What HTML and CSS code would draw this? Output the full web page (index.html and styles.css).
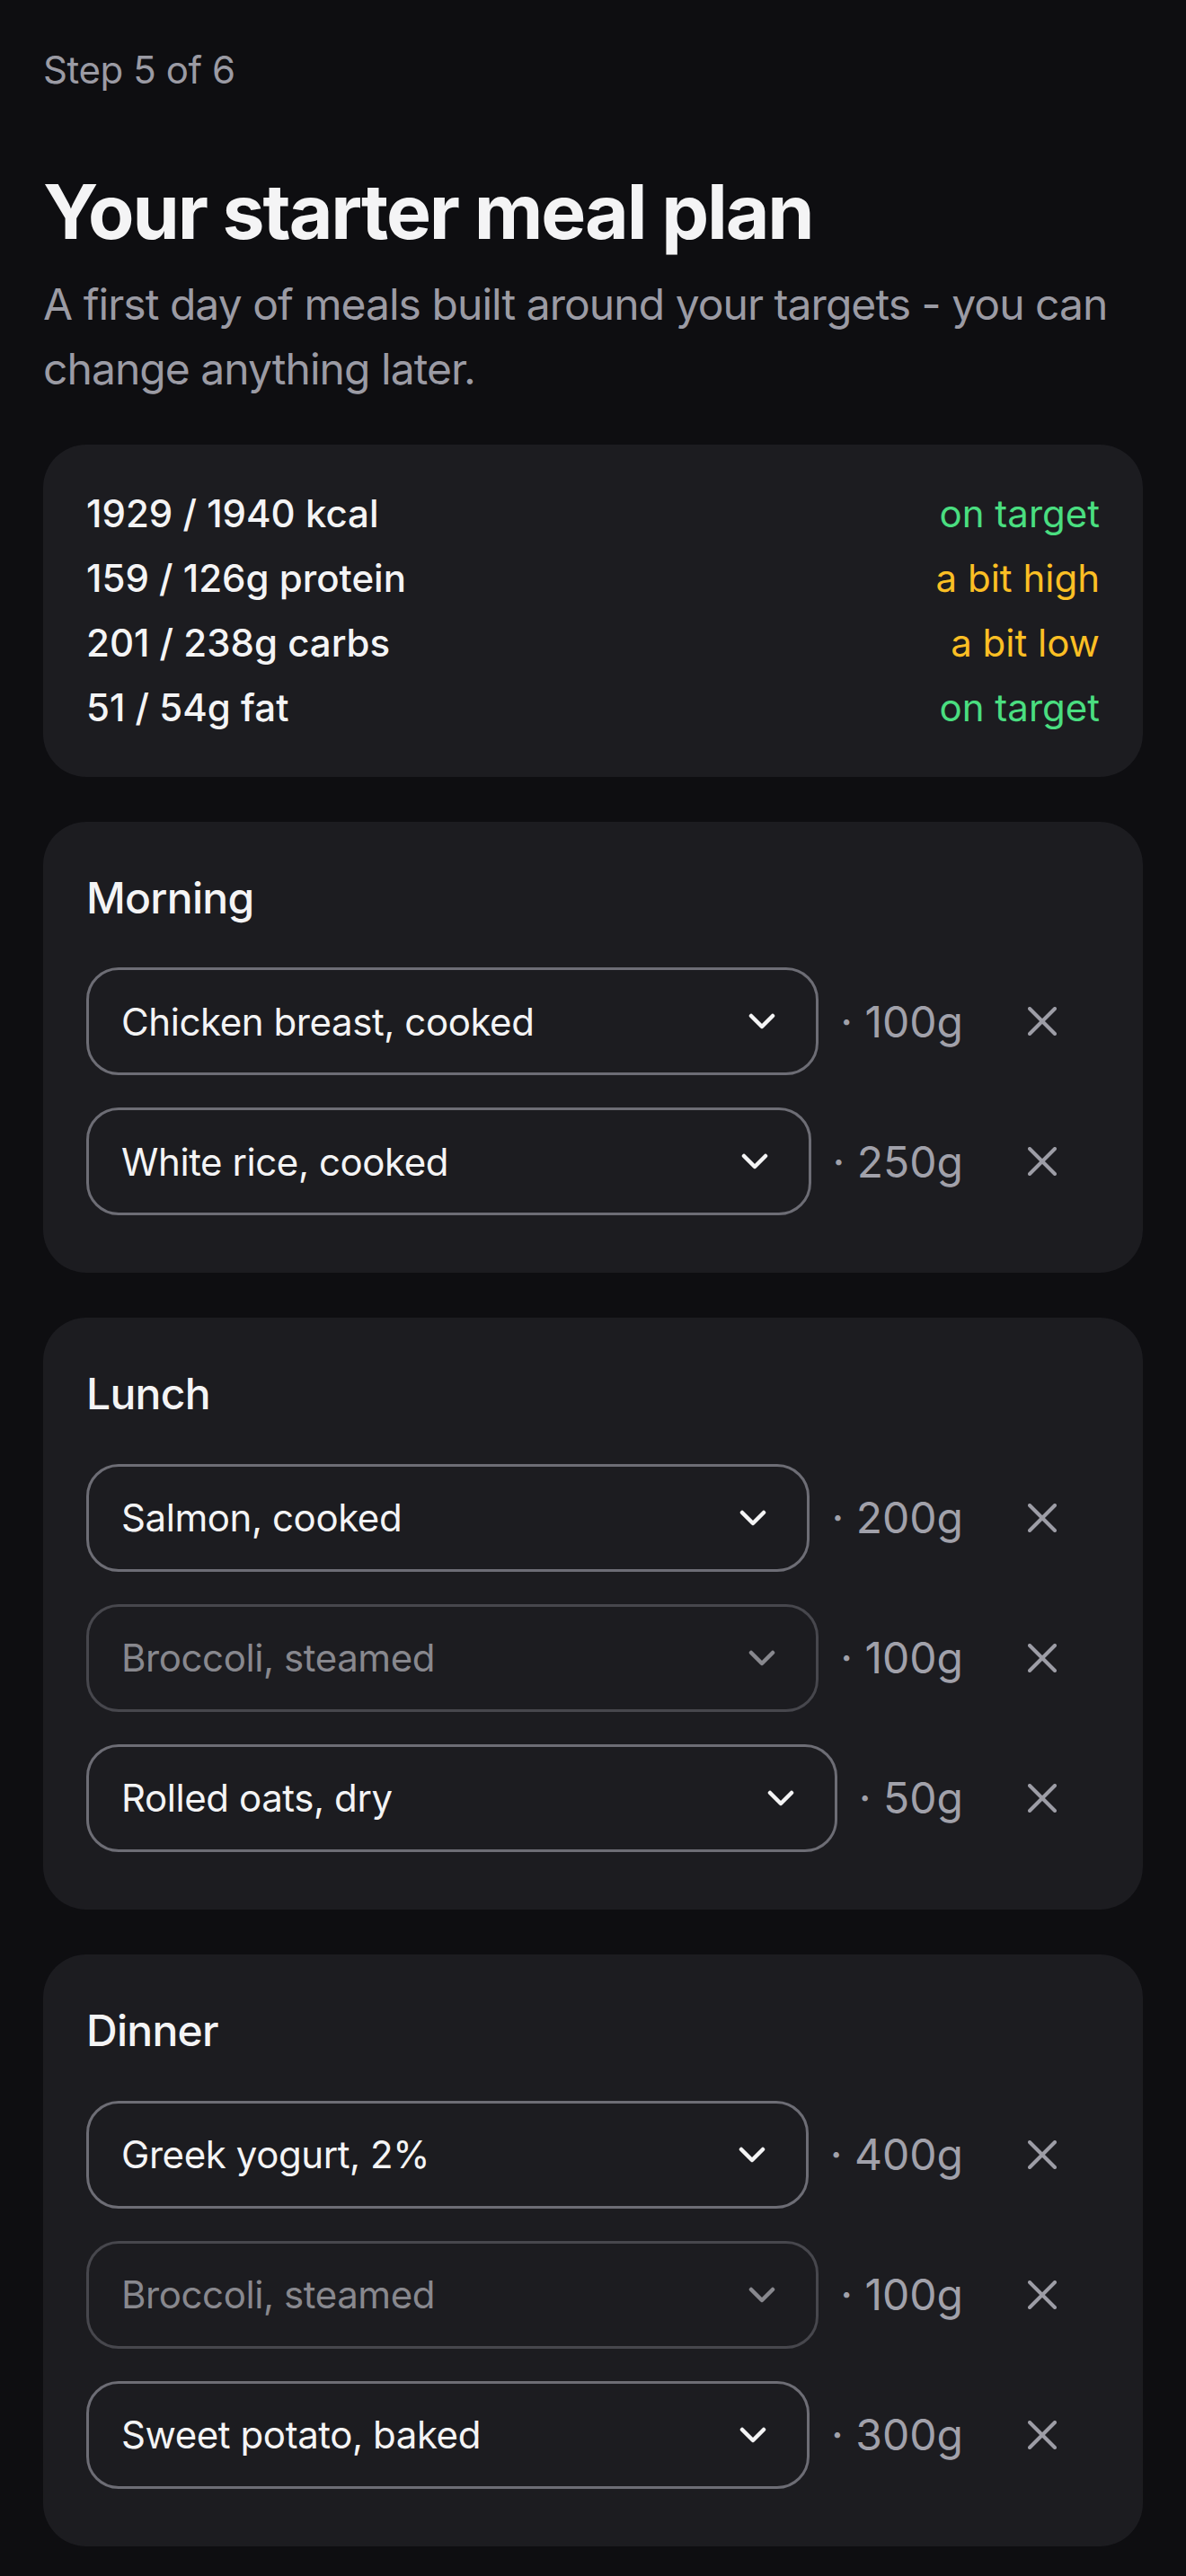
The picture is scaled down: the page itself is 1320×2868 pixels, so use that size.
FILE: index.html
```html
<!DOCTYPE html>
<html lang="en">
<head>
  <meta charset="utf-8">
  <meta name="viewport" content="width=device-width, initial-scale=1.0">
  <title>Starter meal plan</title>
  <link rel="stylesheet" href="styles.css">
</head>
<body>

  <div class="page">
    <p class="step">Step 5 of 6</p>
    <h1>Your starter meal plan</h1>
    <p class="lede">A first day of meals built around your targets - you can change anything later.</p>

    <div class="stack">
      <!-- Totals vs targets -->
      <div class="card summary">
        <div class="stat"><span>1929 / 1940 kcal</span><span class="ok">on target</span></div>
        <div class="stat"><span>159 / 126g protein</span><span class="warn">a bit high</span></div>
        <div class="stat"><span>201 / 238g carbs</span><span class="warn">a bit low</span></div>
        <div class="stat"><span>51 / 54g fat</span><span class="ok">on target</span></div>
      </div>

      <!-- Morning -->
      <div class="card meal">
        <h2>Morning</h2>
        <div class="items">
          <div class="item">
            <button class="picker"><span>Chicken breast, cooked</span><svg class="chev" viewBox="0 0 30 18"><polyline points="3,3 15,15 27,3"/></svg></button>
            <span class="qty">· 100g</span>
            <button class="remove" aria-label="Remove"><svg viewBox="0 0 32 32"><line x1="2" y1="2" x2="30" y2="30"/><line x1="30" y1="2" x2="2" y2="30"/></svg></button>
          </div>
          <div class="item">
            <button class="picker"><span>White rice, cooked</span><svg class="chev" viewBox="0 0 30 18"><polyline points="3,3 15,15 27,3"/></svg></button>
            <span class="qty">· 250g</span>
            <button class="remove" aria-label="Remove"><svg viewBox="0 0 32 32"><line x1="2" y1="2" x2="30" y2="30"/><line x1="30" y1="2" x2="2" y2="30"/></svg></button>
          </div>
        </div>
      </div>

      <!-- Lunch -->
      <div class="card meal">
        <h2>Lunch</h2>
        <div class="items">
          <div class="item">
            <button class="picker"><span>Salmon, cooked</span><svg class="chev" viewBox="0 0 30 18"><polyline points="3,3 15,15 27,3"/></svg></button>
            <span class="qty">· 200g</span>
            <button class="remove" aria-label="Remove"><svg viewBox="0 0 32 32"><line x1="2" y1="2" x2="30" y2="30"/><line x1="30" y1="2" x2="2" y2="30"/></svg></button>
          </div>
          <div class="item">
            <button class="picker muted"><span>Broccoli, steamed</span><svg class="chev" viewBox="0 0 30 18"><polyline points="3,3 15,15 27,3"/></svg></button>
            <span class="qty">· 100g</span>
            <button class="remove" aria-label="Remove"><svg viewBox="0 0 32 32"><line x1="2" y1="2" x2="30" y2="30"/><line x1="30" y1="2" x2="2" y2="30"/></svg></button>
          </div>
          <div class="item">
            <button class="picker"><span>Rolled oats, dry</span><svg class="chev" viewBox="0 0 30 18"><polyline points="3,3 15,15 27,3"/></svg></button>
            <span class="qty">· 50g</span>
            <button class="remove" aria-label="Remove"><svg viewBox="0 0 32 32"><line x1="2" y1="2" x2="30" y2="30"/><line x1="30" y1="2" x2="2" y2="30"/></svg></button>
          </div>
        </div>
      </div>

      <!-- Dinner -->
      <div class="card meal">
        <h2>Dinner</h2>
        <div class="items">
          <div class="item">
            <button class="picker"><span>Greek yogurt, 2%</span><svg class="chev" viewBox="0 0 30 18"><polyline points="3,3 15,15 27,3"/></svg></button>
            <span class="qty">· 400g</span>
            <button class="remove" aria-label="Remove"><svg viewBox="0 0 32 32"><line x1="2" y1="2" x2="30" y2="30"/><line x1="30" y1="2" x2="2" y2="30"/></svg></button>
          </div>
          <div class="item">
            <button class="picker muted"><span>Broccoli, steamed</span><svg class="chev" viewBox="0 0 30 18"><polyline points="3,3 15,15 27,3"/></svg></button>
            <span class="qty">· 100g</span>
            <button class="remove" aria-label="Remove"><svg viewBox="0 0 32 32"><line x1="2" y1="2" x2="30" y2="30"/><line x1="30" y1="2" x2="2" y2="30"/></svg></button>
          </div>
          <div class="item">
            <button class="picker"><span>Sweet potato, baked</span><svg class="chev" viewBox="0 0 30 18"><polyline points="3,3 15,15 27,3"/></svg></button>
            <span class="qty">· 300g</span>
            <button class="remove" aria-label="Remove"><svg viewBox="0 0 32 32"><line x1="2" y1="2" x2="30" y2="30"/><line x1="30" y1="2" x2="2" y2="30"/></svg></button>
          </div>
        </div>
      </div>
    </div>
  </div>

</body>
</html>
```

FILE: styles.css
```css
* {
  font-family: Inter, 'Noto Sans', sans-serif;
  box-sizing: border-box;
}

body {
  margin: 0;
  background-color: #0e0e11;
  color: #f4f4f5;
}

.page {
  padding: 48px 48px 34px;
}

.step {
  margin: 0;
  font-size: 42px;
  line-height: 60px;
  letter-spacing: -0.01em;
  color: #9b9ba4;
}

h1 {
  margin: 78px 0 0;
  font-size: 84px;
  font-weight: 700;
  line-height: 1.2;
  letter-spacing: -0.025em;
  color: #f4f4f5;
}

.lede {
  margin: 16px 0 0;
  font-size: 48px;
  line-height: 72px;
  letter-spacing: -0.02em;
  color: #9b9ba4;
}

.stack {
  display: flex;
  flex-direction: column;
  gap: 50px;
  margin-top: 48px;
}

.card {
  background-color: #1c1c20;
  border-radius: 48px;
}

.summary {
  display: flex;
  flex-direction: column;
  gap: 12px;
  padding: 47px 48px;
}

.stat {
  display: flex;
  justify-content: space-between;
  font-size: 42px;
  line-height: 60px;
  font-weight: 500;
}

.ok {
  color: #4ade80;
  font-weight: 400;
}

.warn {
  color: #fbbf24;
  font-weight: 400;
}

.meal {
  padding: 56px 48px 58px;
}

h2 {
  margin: 0 0 43px;
  font-size: 48px;
  font-weight: 500;
  line-height: 1.2;
  letter-spacing: -0.015em;
}

.items {
  display: flex;
  flex-direction: column;
  gap: 24px;
}

.item {
  display: flex;
  align-items: center;
  gap: 24px;
}

.picker {
  flex: 1;
  display: flex;
  align-items: center;
  justify-content: space-between;
  height: 120px;
  padding: 0 45px 0 36px;
  background: transparent;
  border: 3px solid #6d6d75;
  border-radius: 36px;
  color: #f4f4f5;
  font-size: 42px;
  letter-spacing: -0.01em;
  text-align: left;
  cursor: pointer;
}

.chev {
  width: 30px;
  height: 18px;
  fill: none;
  stroke: currentColor;
  stroke-width: 4.5;
  stroke-linecap: round;
  stroke-linejoin: round;
}

.picker.muted {
  border-color: #47474d;
  color: #88888e;
}

.qty {
  font-size: 48px;
  color: #a1a1aa;
  white-space: nowrap;
}

.remove {
  width: 128px;
  height: 132px;
  display: flex;
  align-items: center;
  justify-content: center;
  padding: 0;
  background: transparent;
  border: none;
  cursor: pointer;
}

.remove svg {
  width: 32px;
  height: 32px;
  stroke: #9d9da6;
  stroke-width: 4;
  stroke-linecap: round;
}
```
